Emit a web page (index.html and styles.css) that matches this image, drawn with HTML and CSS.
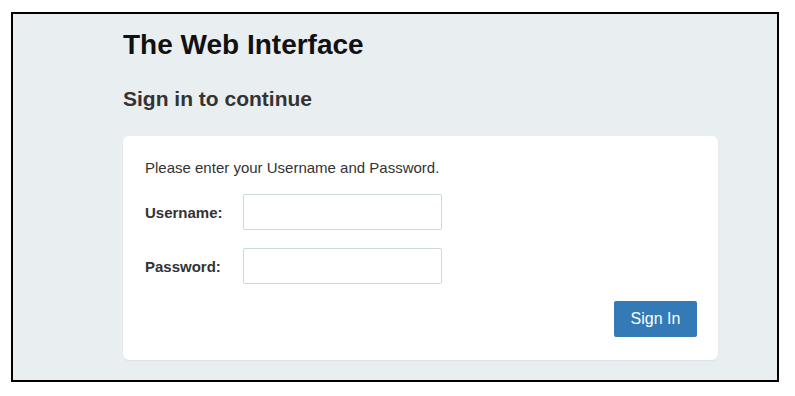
FILE: index.html
```html
<!DOCTYPE html>
<html lang="en">
<head>
    <meta charset="UTF-8">
    <title>The Web Interface</title>
    <link rel="stylesheet" href="styles.css">
</head>
<body>
    <div class="frame">
        <div class="page">
            <h1>The Web Interface</h1>
            <h2>Sign in to continue</h2>
            <div class="card">
                <p class="intro">Please enter your Username and Password.</p>
                <form class="login-form">
                    <div class="row">
                        <label for="username">Username:</label>
                        <input type="text" id="username" class="text-input">
                    </div>
                    <div class="row">
                        <label for="password">Password:</label>
                        <input type="password" id="password" class="text-input">
                    </div>
                    <div class="actions">
                        <button type="submit" class="btn">Sign In</button>
                    </div>
                </form>
            </div>
        </div>
    </div>
</body>
</html>
```

FILE: styles.css
```css
body {
    margin: 0;
    background-color: white;
    font-family: "Liberation Sans", Arial, sans-serif;
    color: #333;
}
.frame {
    margin: 12px 0 0 11px;
    width: 764px;
    height: 366px;
    border: 2px solid #000;
    background-color: #e9eef0;
}
.page {
    padding: 15px 59px 0 110px;
}
h1 {
    margin: 0;
    font-size: 28px;
    line-height: 32px;
    font-weight: bold;
    color: #111;
}
h2 {
    margin: 26px 0 0;
    font-size: 21px;
    line-height: 24px;
    font-weight: bold;
    color: #333;
}
.card {
    margin-top: 25px;
    background-color: white;
    border-radius: 6px;
    box-shadow: 0 1px 2px rgba(0, 0, 0, 0.06);
    padding: 23px 21px 23px 22px;
}
.intro {
    margin: 0 0 18px;
    font-size: 15px;
    line-height: 17px;
    color: #333;
}
.row {
    display: flex;
    align-items: center;
    margin-bottom: 18px;
}
.row label {
    width: 98px;
    font-size: 15px;
    font-weight: bold;
    color: #333;
}
.text-input {
    box-sizing: border-box;
    width: 199px;
    height: 36px;
    border: 1px solid #ccdada;
    border-radius: 2px;
    padding: 6px 10px;
}
.actions {
    display: flex;
    justify-content: flex-end;
    margin-top: -1px;
}
.btn {
    width: 83px;
    height: 36px;
    background-color: #337ab7;
    color: white;
    border: none;
    border-radius: 2px;
    font-family: inherit;
    font-size: 16px;
}
```
